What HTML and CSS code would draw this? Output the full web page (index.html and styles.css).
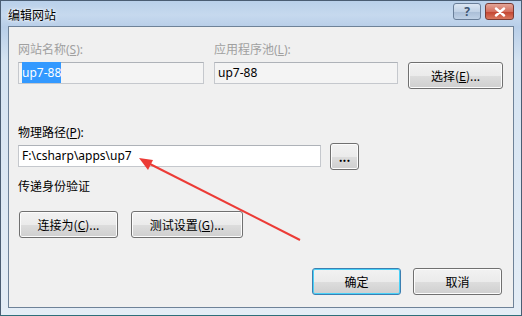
FILE: index.html
```html
<!DOCTYPE html>
<html lang="zh-CN">
<head>
    <meta charset="UTF-8" />
    <title>编辑网站</title>
    <link rel="stylesheet" href="styles.css">
</head>
<body>
    <div class="window">
        <div class="titlebar">
            <span class="title">编辑网站</span>
            <div class="caption-buttons">
                <div class="cap-btn help">?</div>
                <div class="cap-btn close">
                    <svg width="12" height="10" viewBox="0 0 12 10">
                        <path d="M2 1.5 L10 8.5 M10 1.5 L2 8.5" stroke="#fff" stroke-width="2.4" stroke-linecap="round" />
                    </svg>
                </div>
            </div>
        </div>
        <div class="client">
            <div class="site-grid">
                <label class="label disabled">网站名称(<u>S</u>):</label>
                <label class="label disabled">应用程序池(<u>L</u>):</label>
                <span></span>
                <div class="textbox readonly"><span class="selected">up7-88</span></div>
                <div class="textbox readonly">up7-88</div>
                <button class="btn select-btn">选择(<u>E</u>)...</button>
            </div>

            <div class="path-grid">
                <label class="label">物理路径(<u>P</u>):</label>
                <span></span>
                <div class="textbox white">F:\csharp\apps\up7</div>
                <button class="btn dots-btn">...</button>
            </div>

            <div class="label auth-label">传递身份验证</div>
            <div class="auth-buttons">
                <button class="btn connect-btn">连接为(<u>C</u>)...</button>
                <button class="btn test-btn">测试设置(<u>G</u>)...</button>
            </div>

            <div class="dialog-buttons">
                <button class="btn default">确定</button>
                <button class="btn">取消</button>
            </div>
        </div>

        <!-- annotation arrow drawn over the dialog -->
        <svg class="arrow" width="522" height="316" viewBox="0 0 522 316">
            <line x1="300" y1="240" x2="146" y2="162" stroke="#ec3b36" stroke-width="2" />
            <polygon points="139,158 153,160 148,170" fill="#ec3b36" />
        </svg>
    </div>
</body>
</html>
```

FILE: styles.css
```css
body {
    margin: 0;
    font-family: "Noto Sans", "Noto Sans CJK SC", sans-serif;
    font-size: 12px;
    color: #000;
}

.window {
    position: relative;
    width: 522px;
    height: 316px;
    box-sizing: border-box;
    border: 1px solid #4a5d73;
    border-bottom-color: #2f6f7a;
    background: linear-gradient(to bottom, #b9d0ea 0px, #c6d9ee 14px, #b8cee8 26px, #d5e3f1 60px, #e4edf6 100%);
    display: flex;
    flex-direction: column;
    padding: 0 7px 7px 7px;
}

.titlebar {
    height: 25px;
    display: flex;
    justify-content: space-between;
    align-items: flex-start;
    flex-shrink: 0;
}

.title {
    margin-top: 6px;
    padding-left: 0;
    font-family: "Noto Sans CJK SC", sans-serif;
    font-size: 12px;
    line-height: 16px;
    text-shadow: 0 0 4px #fff, 0 0 2px #fff;
}

.caption-buttons {
    display: flex;
    gap: 4px;
    margin-top: 2px;
}

.cap-btn {
    height: 17px;
    box-sizing: border-box;
    border: 1px solid #6a7f99;
    border-radius: 3px;
    display: flex;
    align-items: center;
    justify-content: center;
}

.help {
    width: 28px;
    background: linear-gradient(to bottom, #dbe6f3 0%, #c1d2e6 50%, #a9bdd6 51%, #bfd1e6 100%);
    color: #3d5572;
    font-weight: bold;
    font-size: 12px;
    line-height: 15px;
}

.close {
    width: 29px;
    border-color: #7a3c34;
    background: linear-gradient(to bottom, #e4a597 0%, #d4705f 50%, #c2432f 51%, #d9785f 100%);
}

.client {
    flex: 1;
    background: #f0f0f0;
    border: 1px solid #6e8298;
    padding: 14px 11px 0 9px;
    display: flex;
    flex-direction: column;
}

.label {
    line-height: 17px;
    font-family: "Noto Sans", "Noto Sans CJK SC", sans-serif;
}

.label.disabled {
    color: #a0a0a0;
}

.site-grid {
    display: grid;
    grid-template-columns: 186px 184px 95px;
    column-gap: 10px;
    row-gap: 4px;
    align-items: start;
}

.textbox {
    height: 22px;
    box-sizing: border-box;
    border: 1px solid #c5c8cd;
    border-top-color: #aeb2b8;
    padding: 0 3px;
    line-height: 20px;
    white-space: nowrap;
}

.textbox.readonly {
    background: #f4f4f4;
}

.textbox.white {
    background: #fff;
}

.selected {
    background: #3399ff;
    color: #fff;
    padding: 2px 0;
}

.btn {
    box-sizing: border-box;
    height: 27px;
    border: 1px solid #707070;
    border-radius: 3px;
    background: linear-gradient(to bottom, #f2f2f2 0%, #ebebeb 50%, #dddddd 51%, #cfcfcf 100%);
    box-shadow: inset 0 0 0 1px #fcfcfc;
    font-family: "Noto Sans CJK SC", sans-serif;
    font-size: 12px;
    color: #000;
    padding: 0;
}

.btn u {
    text-decoration: underline;
}

.select-btn {
    width: 95px;
}

.path-grid {
    margin-top: 35px;
    display: grid;
    grid-template-columns: 303px 29px;
    column-gap: 9px;
    row-gap: 4px;
}

.dots-btn {
    width: 29px;
    margin-top: -2px;
    font-weight: bold;
    line-height: 12px;
}

.auth-label {
    margin-top: 8px;
}

.auth-buttons {
    margin-top: 16px;
    margin-left: 1px;
    display: flex;
    gap: 13px;
}

.connect-btn {
    width: 99px;
}

.test-btn {
    width: 112px;
}

.dialog-buttons {
    margin-top: 30px;
    display: flex;
    justify-content: flex-end;
    gap: 12px;
}

.dialog-buttons .btn {
    width: 89px;
}

.btn.default {
    border-color: #3c7fb1;
    box-shadow: inset 0 0 0 1px #48d1f8;
}

.arrow {
    position: absolute;
    left: -1px;
    top: -1px;
    pointer-events: none;
}
```
